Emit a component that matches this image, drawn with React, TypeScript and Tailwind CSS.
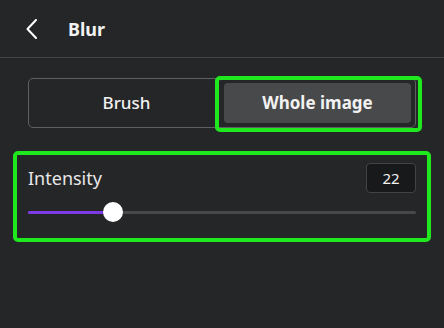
import { useState } from "react";

const FONT = { fontFamily: '"Noto Sans", "Open Sans", sans-serif' };

function BackIcon() {
  return (
    <svg width="12" height="20" viewBox="0 0 12 20" fill="none" className="text-white">
      <path d="M10 1 L1.5 10 L10 19" stroke="currentColor" strokeWidth="2" strokeLinecap="round" strokeLinejoin="round" />
    </svg>
  );
}

export default function App() {
  const [mode, setMode] = useState<"brush" | "whole">("whole");
  const value = 22;
  const pct = value;

  return (
    <div className="relative w-[444px] h-[328px] bg-[#252627] text-white overflow-hidden" style={FONT}>
      {/* header */}
      <div className="flex items-center h-[58px] pl-[26px] gap-[30px] border-b border-[#434446]">
        <BackIcon />
        <span className="text-[18px] font-bold leading-none text-[#f2f2f2]">Blur</span>
      </div>

      <div className="px-[28px] pt-[20px]">
        {/* segmented */}
        <div className="grid grid-cols-2 gap-[4px] p-[4px] h-[50px] border border-[#5f6062] rounded-[5px]">
          <button
            onClick={() => setMode("brush")}
            className={`rounded-[4px] text-[17px] ${mode === "brush" ? "bg-[#48494b] font-bold" : "font-medium"} text-[#f2f2f2]`}
          >
            Brush
          </button>
          <button
            onClick={() => setMode("whole")}
            className={`rounded-[4px] text-[17px] ${mode === "whole" ? "bg-[#48494b] font-bold" : "font-medium"} text-[#f2f2f2]`}
          >
            Whole image
          </button>
        </div>

        {/* intensity */}
        <div className="mt-[35px] flex items-center justify-between h-[30px]">
          <span className="text-[18px] text-[#e8e8e8]">Intensity</span>
          <div className="w-[50px] h-[30px] flex items-center justify-center rounded-[4px] bg-[#18191b] border border-[#424345] text-[15px] text-[#f2f2f2]">
            {value}
          </div>
        </div>

        <div className="relative h-[20px] mt-[9px] flex items-center">
          <div className="w-full h-[3px] rounded-full bg-[#47484a]" />
          <div className="absolute left-0 h-[3px] rounded-full bg-[#7d3ae6]" style={{ width: `${pct}%` }} />
          <div
            className="absolute w-[20px] h-[20px] rounded-full bg-white -translate-x-1/2"
            style={{ left: `${pct}%` }}
          />
        </div>
      </div>

      {/* annotation highlights */}
      <div className="absolute left-[215px] top-[76px] w-[207px] h-[56px] border-[4px] border-[#1fe81f] rounded-[5px]" />
      <div className="absolute left-[13px] top-[151px] w-[418px] h-[91px] border-[4px] border-[#1fe81f] rounded-[5px]" />
    </div>
  );
}
